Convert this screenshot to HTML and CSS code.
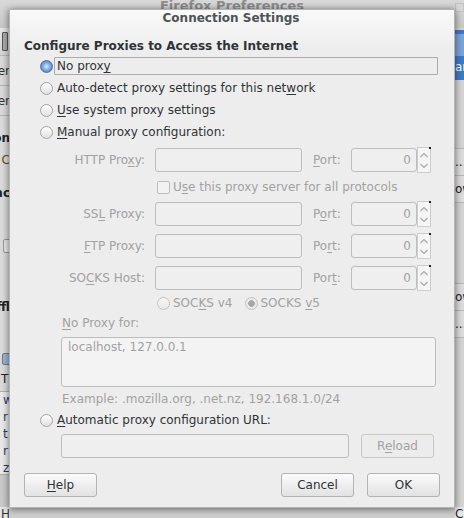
FILE: index.html
```html
<!DOCTYPE html>
<html>
<head>
<meta charset="utf-8">
<link rel="stylesheet" href="styles.css">
</head>
<body>
<div class="desktop">
  <div class="backwin">
    <div class="back-title">
      <span class="back-title-text">Firefox Preferences</span>
      <span class="back-close"></span>
    </div>
    <div class="back-body">
      <div class="back-left">
        <div class="bl-toolbar"><span class="bl-icon"></span></div>
        <div class="bl-item"><span>Proxy Server</span></div>
        <div class="bl-item"><span>Proxy Server</span></div>
        <div class="bl-pane">
          <div class="bl-line bl-bold bl-on">Connection</div>
          <div class="bl-line bl-c">Configure how Firefox C</div>
          <div class="bl-line bl-bold bl-nc">Cached Web Conte nc</div>
          <div class="bl-check"></div>
          <div class="bl-line bl-bold bl-fl">Offl</div>
          <div class="bl-bicon"></div>
          <div class="bl-line bl-th">Tl</div>
          <div class="bl-list">
            <div>w</div><div>r</div><div>t</div><div>r</div><div>z</div>
          </div>
          <div class="bl-foot"></div>
          <div class="bl-help">Help</div>
        </div>
      </div>
      <div class="back-mid"></div>
      <div class="back-right">
        <div class="br-sel"><span class="br-icon"></span><span class="br-text">ar</span></div>
        <div class="br-gap"></div>
        <div class="br-row">...</div>
        <div class="br-row br-ow">ow</div>
        <div class="br-gap2"></div>
        <div class="br-row br-ow">ow</div>
        <div class="br-row">...</div>
        <div class="br-gap3"></div>
        <div class="br-row br-clea">Clea</div>
      </div>
    </div>
  </div>

  <div class="dialog">
    <div class="dlg-title">Connection Settings</div>
    <div class="dlg-content">
      <div class="heading">Configure Proxies to Access the Internet</div>

      <div class="radio-row">
        <span class="radio on"></span>
        <span class="rlabel focus">No prox<u>y</u></span>
      </div>
      <div class="radio-row">
        <span class="radio"></span>
        <span class="rlabel">Auto-detect proxy settings for this net<u>w</u>ork</span>
      </div>
      <div class="radio-row">
        <span class="radio"></span>
        <span class="rlabel"><u>U</u>se system proxy settings</span>
      </div>
      <div class="radio-row">
        <span class="radio"></span>
        <span class="rlabel"><u>M</u>anual proxy configuration:</span>
      </div>

      <div class="manual">
        <div class="prow first">
          <span class="plabel">HTTP Pro<u>x</u>y:</span>
          <span class="field host"></span>
          <span class="portlabel"><u>P</u>ort:</span>
          <span class="field port">0</span>
          <span class="spin"><svg width="12" height="24" viewBox="0 0 12 24"><polyline points="2.5,9 6,5.5 9.5,9" /><polyline points="2.5,16 6,19.5 9.5,16" /></svg></span>
        </div>
        <div class="checkrow">
          <span class="checkbox"></span>
          <span class="dis">U<u>s</u>e this proxy server for all protocols</span>
        </div>
        <div class="prow">
          <span class="plabel">SS<u>L</u> Proxy:</span>
          <span class="field host"></span>
          <span class="portlabel">P<u>o</u>rt:</span>
          <span class="field port">0</span>
          <span class="spin"><svg width="12" height="24" viewBox="0 0 12 24"><polyline points="2.5,9 6,5.5 9.5,9" /><polyline points="2.5,16 6,19.5 9.5,16" /></svg></span>
        </div>
        <div class="prow gap">
          <span class="plabel"><u>F</u>TP Proxy:</span>
          <span class="field host"></span>
          <span class="portlabel">Po<u>r</u>t:</span>
          <span class="field port">0</span>
          <span class="spin"><svg width="12" height="24" viewBox="0 0 12 24"><polyline points="2.5,9 6,5.5 9.5,9" /><polyline points="2.5,16 6,19.5 9.5,16" /></svg></span>
        </div>
        <div class="prow gap">
          <span class="plabel">SO<u>C</u>KS Host:</span>
          <span class="field host"></span>
          <span class="portlabel">Por<u>t</u>:</span>
          <span class="field port">0</span>
          <span class="spin"><svg width="12" height="24" viewBox="0 0 12 24"><polyline points="2.5,9 6,5.5 9.5,9" /><polyline points="2.5,16 6,19.5 9.5,16" /></svg></span>
        </div>
        <div class="socksrow">
          <span class="radio dis"></span>
          <span class="dis v4">SOC<u>K</u>S v4</span>
          <span class="radio dis on"></span>
          <span class="dis">SOCKS <u>v</u>5</span>
        </div>
        <div class="noproxy dis"><u>N</u>o Proxy for:</div>
        <div class="textarea">localhost, 127.0.0.1</div>
        <div class="example dis">Example: .mozilla.org, .net.nz, 192.168.1.0/24</div>
      </div>

      <div class="radio-row auto">
        <span class="radio"></span>
        <span class="rlabel"><u>A</u>utomatic proxy configuration URL:</span>
      </div>
      <div class="urlrow">
        <span class="field url"></span>
        <span class="btn disabled">R<u>e</u>load</span>
      </div>

      <div class="btnrow">
        <span class="btn"><u>H</u>elp</span>
        <span class="spacer"></span>
        <span class="btn">Cancel</span>
        <span class="btn ok">OK</span>
      </div>
    </div>
  </div>
</div>
</body>
</html>
```

FILE: styles.css
```css
html, body {
  margin: 0;
  padding: 0;
}
body {
  width: 464px;
  height: 518px;
  overflow: hidden;
  font-family: "DejaVu Sans", "Liberation Sans", sans-serif;
  font-size: 12px;
  color: #2e3436;
}
.desktop {
  position: relative;
  width: 464px;
  height: 518px;
  overflow: hidden;
  background: #cfcfcf;
}

/* ---------- background window ---------- */
.backwin {
  display: flex;
  flex-direction: column;
  width: 464px;
  height: 518px;
}
.back-title {
  height: 28px;
  flex: none;
  background: linear-gradient(#d9d9d9, #c9c9c9);
  display: flex;
  justify-content: center;
  position: relative;
}
.back-title-text {
  font-weight: bold;
  font-size: 13px;
  line-height: 13px;
  color: #8d8d8d;
  margin-top: -1px;
}
.back-close {
  position: absolute;
  right: 0;
  top: 3px;
  width: 7px;
  height: 7px;
  border: 1px solid #c4c4c4;
  background: #d8d8d8;
}
.back-body {
  flex: 1;
  display: flex;
}
.back-left {
  width: 10px;
  display: flex;
  flex-direction: column;
  overflow: hidden;
  background: #dedede;
}
.back-mid {
  flex: 1;
}
.back-right {
  width: 9px;
  display: flex;
  flex-direction: column;
  overflow: hidden;
  background: #d4d4d4;
}
.bl-toolbar {
  height: 27px;
  background: linear-gradient(#e6e6e6, #d6d6d6);
  border-bottom: 1px solid #b9b9b9;
  display: flex;
  justify-content: flex-end;
  align-items: center;
}
.bl-icon {
  width: 4px;
  height: 17px;
  margin-right: 2px;
  border: 1px solid #555;
  border-radius: 1px;
  background: #aaa;
}
.bl-item {
  height: 29px;
  display: flex;
  justify-content: flex-end;
  align-items: center;
  border-bottom: 1px solid #b5b5b5;
  background: #d9d9d9;
  white-space: nowrap;
  color: #333;
}
.bl-pane {
  flex: 1;
  display: flex;
  flex-direction: column;
  background: #dadada;
}
.bl-line {
  display: flex;
  justify-content: flex-end;
  white-space: nowrap;
  height: 16px;
  line-height: 16px;
  color: #222;
}
.bl-bold { font-weight: bold; }
.bl-on { margin-top: 14px; }
.bl-c { margin-top: 6px; color: #6a4a20; }
.bl-nc { margin-top: 17px; }
.bl-check {
  margin-top: 38px;
  margin-left: 3px;
  width: 12px;
  height: 12px;
  border: 1px solid #9a9a9a;
  border-radius: 2px;
  background: #e8e8e8;
}
.bl-fl { margin-top: 46px; }
.bl-bicon {
  margin-top: 38px;
  margin-left: 2px;
  width: 10px;
  height: 10px;
  border: 1px solid #777;
  border-radius: 2px;
  background: #9bb3d8;
}
.bl-th { margin-top: 6px; justify-content: flex-start; padding-left: 1px; }
.bl-list {
  margin-top: 4px;
  height: 82px;
  background: #e9e9e9;
  border-top: 1px solid #b0b0b0;
  border-bottom: 1px solid #b0b0b0;
  display: flex;
  flex-direction: column;
  color: #2d3a7a;
  padding-left: 3px;
  line-height: 17px;
}
.bl-foot {
  height: 32px;
  background: #c9c9c9;
}
.bl-help {
  white-space: nowrap;
  color: #333;
  line-height: 14px;
  padding-left: 1px;
  background: #e5e5e5;
  flex: 1;
}
.br-sel {
  height: 50px;
  margin-top: 2px;
  background: #3d79c9;
  display: flex;
  flex-direction: column;
  color: #fff;
}
.br-icon {
  height: 22px;
  margin-top: 4px;
  background: #7aa3d8;
}
.br-text {
  line-height: 16px;
  margin-top: 3px;
}
.br-gap {
  height: 68px;
  border-bottom: 1px solid #b8b8b8;
}
.br-row {
  height: 26px;
  line-height: 26px;
  border-bottom: 1px solid #b8b8b8;
  background: #dcdcdc;
  color: #223;
  white-space: nowrap;
}
.br-gap2 { height: 80px; border-bottom: 1px solid #b8b8b8; }
.br-gap3 { flex: 1; }
.br-clea { border-bottom: none; background: #e6e6e6; line-height: 14px; height: 14px; }

/* ---------- dialog ---------- */
.dialog {
  position: absolute;
  left: 9px;
  top: 9px;
  width: 444px;
  height: 497px;
  border: 1px solid #b4b4b4;
  background: linear-gradient(#f9f9f9 0, #ededed 40px, #ededed 100%);
  box-shadow: 0 1px 7px rgba(0, 0, 0, 0.55);
  display: flex;
  flex-direction: column;
}
.dlg-title {
  height: 16px;
  line-height: 16px;
  text-align: center;
  font-weight: bold;
  color: #4d5356;
  margin-right: 2px;
}
.dlg-content {
  display: flex;
  flex-direction: column;
  padding: 0 16px 0 14px;
}
.heading {
  margin-top: 12px;
  height: 16px;
  line-height: 16px;
  font-weight: bold;
  color: #2e3436;
}
.radio-row {
  display: flex;
  align-items: center;
  height: 22px;
  margin-left: 16px;
}
.heading + .radio-row { margin-top: 1px; }
.radio {
  flex: none;
  width: 13px;
  height: 13px;
  box-sizing: border-box;
  border-radius: 50%;
  border: 1px solid #a4a4a4;
  background: linear-gradient(#ffffff, #e0e0e0);
  margin-right: 4px;
}
.radio.on {
  border-color: #55719a;
  background: radial-gradient(circle at 50% 50%, #dbe8fb 0, #9fc0ef 30%, #4f86d8 75%, #3e6fb8 100%);
}
.radio.dis {
  border-color: #c3c3c3;
  background: linear-gradient(#f7f7f7, #e8e8e8);
}
.radio.dis.on {
  background: radial-gradient(circle, #a6a6a6 0, #a6a6a6 3px, #e9e9e9 3.6px);
}
.rlabel {
  line-height: 17px;
  white-space: nowrap;
}
.rlabel.focus {
  flex: 1;
  margin-left: -3px;
  padding-left: 2px;
  border: 1px solid #ababab;
  height: 16px;
  line-height: 16px;
  border-radius: 1px;
}

.manual {
  display: flex;
  flex-direction: column;
  margin-left: 37px;
  color: #a2a2a2;
}
.dis { color: #a2a2a2; }
.prow {
  display: flex;
  align-items: center;
  height: 24px;
}
.prow.first { margin-top: 5px; }
.prow.gap { margin-top: 8px; }
.plabel {
  width: 84px;
  text-align: right;
  margin-right: 10px;
  white-space: nowrap;
}
.field {
  box-sizing: border-box;
  height: 24px;
  border: 1px solid #bdbdbd;
  border-radius: 3px;
  background: #efefef;
}
.host { width: 147px; }
.portlabel {
  margin-left: 11px;
  width: 38px;
}
.port {
  width: 66px;
  text-align: right;
  padding-right: 5px;
  line-height: 22px;
}
.spin {
  box-sizing: border-box;
  width: 14px;
  height: 26px;
  border: 1px solid #cdcdcd;
  background: #f5f5f5;
  display: flex;
  align-items: center;
  justify-content: center;
  position: relative;
}
.spin::after {
  content: "";
  position: absolute;
  right: -1px;
  top: -1px;
  width: 2px;
  height: 2px;
  background: #222;
}
.spin svg polyline {
  fill: none;
  stroke: #a9a9a9;
  stroke-width: 1.2;
}
.checkrow {
  display: flex;
  align-items: center;
  height: 30px;
  padding-left: 96px;
}
.checkbox {
  box-sizing: border-box;
  width: 13px;
  height: 13px;
  border: 1px solid #bdbdbd;
  border-radius: 2px;
  background: #f2f2f2;
  margin-right: 3px;
}
.socksrow {
  display: flex;
  align-items: center;
  height: 26px;
  padding-left: 96px;
}
.socksrow .radio { margin-right: 3px; }
.socksrow .v4 { margin-right: 12px; }
.noproxy {
  height: 14px;
  line-height: 14px;
  padding-left: 1px;
}
.textarea {
  margin-top: 7px;
  box-sizing: border-box;
  width: 375px;
  height: 50px;
  border: 1px solid #bdbdbd;
  border-radius: 3px;
  background: #f3f3f3;
  padding: 2px 6px;
  line-height: 15px;
  color: #a2a2a2;
}
.example {
  height: 23px;
  line-height: 24px;
  padding-left: 1px;
}
.radio-row.auto {
  height: 20px;
}
.urlrow {
  display: flex;
  margin-left: 37px;
  margin-top: 4px;
}
.url {
  width: 288px;
  background: #efefef;
}
.btn {
  box-sizing: border-box;
  width: 73px;
  height: 24px;
  line-height: 22px;
  text-align: center;
  border: 1px solid #b3b3b3;
  border-radius: 3px;
  background: linear-gradient(#fbfbfb, #e2e2e2);
  color: #2e3436;
}
.urlrow .btn {
  margin-left: 12px;
}
.btn.disabled {
  color: #a2a2a2;
  border-color: #c8c8c8;
  background: #ececec;
}
.btnrow {
  display: flex;
  margin-top: 15px;
  margin-right: -2px;
}
.spacer { flex: 1; }
.btnrow .btn.ok { margin-left: 13px; }
u { text-decoration: underline; text-underline-offset: 2px; }
```
